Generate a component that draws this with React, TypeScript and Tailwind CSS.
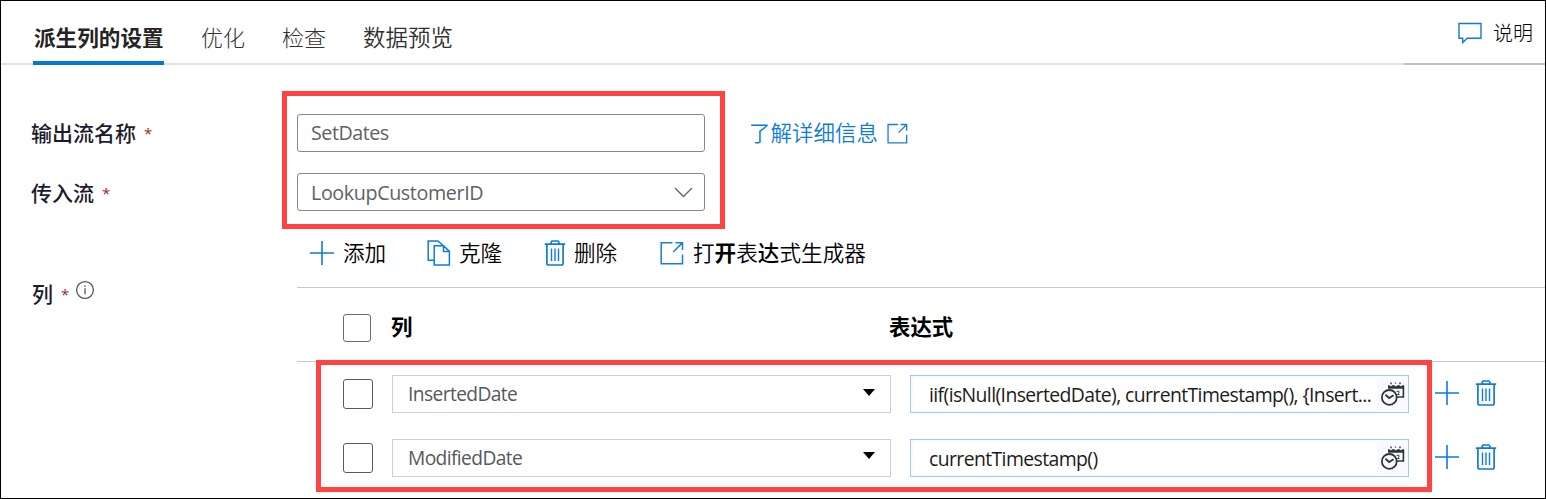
import React from "react";

const Plus = () => (
  <svg width="26" height="26" viewBox="0 0 26 26" fill="none" stroke="#0f7bd8" strokeWidth="1.6" className="shrink-0">
    <path d="M13 1v24M1 13h24" />
  </svg>
);

const Trash = ({ width = 22 }: { width?: number }) => (
  <svg width={width} height="26" viewBox="0 0 22 26" preserveAspectRatio="none" fill="none" stroke="#0f7bd8" strokeWidth="1.7" className="shrink-0">
    <path d="M.8 4.2h20.4M7.2 4V2.2q0-1.2 1.2-1.2h5.2q1.2 0 1.2 1.2V4M2.9 4.2v19q0 1.8 1.8 1.8h12.6q1.8 0 1.8-1.8v-19" />
    <path d="M7.5 8.5v12.6M11 8.5v12.6M14.5 8.5v12.6" strokeWidth="1.4" />
  </svg>
);

const Copy = () => (
  <svg width="24" height="26" viewBox="0 0 24 26" fill="none" stroke="#0f7bd8" strokeWidth="1.5" className="shrink-0">
    <path d="M7.2 20.2H1.2V.9h9.6l5.4 4.6" />
    <path d="M7.2 5.7h9.3l5.9 5.7v13.7H7.2zM16.5 5.7v5.7h5.9" />
  </svg>
);

const External = ({ size = 24 }: { size?: number }) => (
  <svg width={size} height={size} viewBox="0 0 24 24" fill="none" stroke="#1b7cd9" strokeWidth="1.5" className="shrink-0">
    <path d="M12.5 1.7H1.2v21h21.3V13.5M15.5 1.7h7v7.2M22.3 1.9 13.2 11" />
  </svg>
);

const Comment = () => (
  <svg width="24" height="22" viewBox="0 0 24 22" fill="none" stroke="#0f7bd8" strokeWidth="1.4" className="shrink-0">
    <path d="M1 1.5h22v14.8H9.3l-4.6 4.2v-4.2H1z" />
  </svg>
);

const ClockCalendar = () => (
  <svg width="24" height="24" viewBox="0 0 24 24" fill="none" stroke="#333" className="shrink-0">
    <path d="M7 3.2h1.6l1.2 1.2 1.4-1.2h2.2l1.5 1.2 1.5-1.2h2.2l1.4 1.2 1.2-1.2h2v3.6H7z" fill="#333" stroke="none" />
    <path d="M10 .4v1.8M14.5.4v1.2M19 .4v1.8" strokeWidth="1.4" />
    <path d="M22.4 6v9H16" strokeWidth="1.6" />
    <path d="M15.6 9.4q2.8-1 2.6.8-.3 1.2-1.8 2.4h2.2" strokeWidth="1" />
    <circle cx="8.3" cy="15.4" r="7.4" fill="#f4f9fe" strokeWidth="1.8" />
    <path d="m4.4 12.6 3.6 3.4 4.6-2.8" strokeWidth="1.8" />
  </svg>
);

const Star = () => <span className="mb-[1px] text-[15px] leading-none text-[#a4262c]">*</span>;

const Checkbox = ({ small = false }: { small?: boolean }) => (
  <span
    className={
      small
        ? "block h-[28px] w-[28px] rounded-[3px] border-[1.5px] border-[#6b6b6b]"
        : "block h-[30px] w-[30px] rounded-[3px] border-[1.5px] border-[#5c5c5c]"
    }
  />
);

const Row = ({ name, expr }: { name: string; expr: string }) => (
  <div className="flex h-[38px] items-center whitespace-nowrap">
    <div className="w-[49px] shrink-0">
      <Checkbox />
    </div>
    <div className="mr-[19px] flex h-[38px] w-[499px] shrink-0 items-center justify-between border border-[#d0d0d0] pr-[15px] pl-[15px]">
      <span className="pt-[1px] text-[19.2px] tracking-[-0.6px] text-[#55585c]">{name}</span>
      <svg width="12" height="7" viewBox="0 0 12 7" className="mb-[4px]">
        <path d="M0 0h12L6 7z" fill="#000" />
      </svg>
    </div>
    <div className="mr-[25px] flex h-[38px] w-[499px] shrink-0 items-center justify-between border border-[#a4c9ea] bg-[#f7fbff] p-[2px] pr-[3px]">
      <div className="flex h-full w-[464px] items-center bg-white pt-[2px] pl-[16px] text-[19.4px] tracking-[-0.6px] text-[#1c1c1c]">{expr}</div>
      <ClockCalendar />
    </div>
    <div className="-mt-[2px] flex items-center gap-[15px]">
      <Plus />
      <Trash />
    </div>
  </div>
);

const tab = "w-fit text-[22px] font-light text-[#323130]";

export default function App() {
  return (
    <div className="relative flex h-[499px] w-[1546px] flex-col overflow-hidden border border-black bg-white font-['Open_Sans','Noto_Sans_CJK_SC',sans-serif] text-black">
      <header className="flex h-[64px] shrink-0 items-stretch whitespace-nowrap">
        <nav className="flex w-[1403px] items-stretch border-b-2 border-[#e2e2e2] pl-[32px]">
          <div className="mr-[37px] -mb-[2px] flex w-[131px] items-center border-b-4 border-[#0078d4] pt-[15px] pl-[1px] text-[21.6px] font-bold text-[#252423]">派生列的设置</div>
          <div className="flex w-[81px] items-center pt-[11px]"><span className={tab}>优化</span></div>
          <div className="flex w-[81px] items-center pt-[11px]"><span className={tab}>检查</span></div>
          <div className="flex items-center pt-[12px]"><span className="text-[22.5px] font-[350] text-[#323130]">数据预览</span></div>
        </nav>
        <div className="flex flex-1 items-center gap-[11px] border-b-2 border-[#c0c0c0] pt-[2px] pl-[54px]">
          <Comment />
          <span className="pt-[2px] text-[20px] font-light">说明</span>
        </div>
      </header>

      <main className="flex flex-1">
        <aside className="w-[296px] shrink-0 pl-[30px] text-[21px] font-medium whitespace-nowrap text-[#201a2c]">
          <div className="mt-[50px] flex h-[38px] items-center gap-[8px]">输出流名称 <Star /></div>
          <div className="mt-[22px] flex h-[38px] items-center gap-[8px]">传入流 <Star /></div>
          <div className="mt-[63px] flex h-[38px] items-center gap-[8px] pl-px">
            列 <Star />
            <svg width="20" height="20" viewBox="0 0 20 20" fill="none" stroke="#555" strokeWidth="1.3" className="-mt-[10px] -ml-[2px]">
              <circle cx="10" cy="10" r="8.4" />
              <path d="M10 8.2v6M10 5.4v1.6" />
            </svg>
          </div>
        </aside>

        <section className="flex-1 whitespace-nowrap">
          <div className="mt-[49px] flex h-[38px] items-center">
            <div className="flex h-[38px] w-[408px] items-center rounded-[3px] border-[1.5px] border-[#8a8886] pl-[13px] text-[19.7px] tracking-[-0.48px] text-[#5f6164]">SetDates</div>
            <a className="ml-[44px] flex items-center gap-[9px] text-[21.5px] font-[350] text-[#0f7bd8]">
              了解详细信息 <External size={21} />
            </a>
          </div>
          <div className="mt-[21px] flex h-[38px] w-[408px] items-center justify-between rounded-[3px] border-[1.5px] border-[#8a8886] pt-[1px] pr-[11px] pl-[13px] text-[19.7px] tracking-[-0.38px] text-[#5f6164]">
            LookupCustomerID
            <svg width="19" height="11" viewBox="0 0 19 11" fill="none" stroke="#666" strokeWidth="1.4">
              <path d="m1 1 8.5 8.5L18 1" />
            </svg>
          </div>

          <div className="mt-[21px] flex h-[42px] items-center text-[21.6px] font-[350]">
            <div className="flex w-[118px] items-center gap-[8px] pl-[12px]"><Plus />添加</div>
            <div className="flex w-[117px] items-center gap-[8px] pl-[12px]"><Copy />克隆</div>
            <div className="flex w-[116px] items-center gap-[8px] pl-[12px]"><Trash />删除</div>
            <div className="flex items-center gap-[9px] pl-[12px]">
              <External />
              <span>打<b>开</b>表<span className="font-medium">达</span>式生成器</span>
            </div>
          </div>

          <div className="mt-[13px] flex h-[75px] items-center border-t-[1.5px] border-b border-[#c8c8c8] pt-[6px] pl-[46px] text-[21.4px] font-bold">
            <div className="w-[48px]"><Checkbox small /></div>
            <div className="w-[498px]">列</div>
            <div>表达式</div>
          </div>

          <div className="flex flex-col gap-[25.5px] pt-[13px] pl-[46px]">
            <Row name="InsertedDate" expr="iif(isNull(InsertedDate), currentTimestamp(), {Insert..." />
            <Row name="ModifiedDate" expr="currentTimestamp()" />
          </div>
        </section>
      </main>

      <div className="absolute top-[90px] left-[281px] h-[138px] w-[443px] border-[5px] border-[#ff4343]" />
      <div className="absolute top-[359px] left-[315px] h-[132px] w-[1116px] border-[5px] border-[#ff4343]" />
    </div>
  );
}
